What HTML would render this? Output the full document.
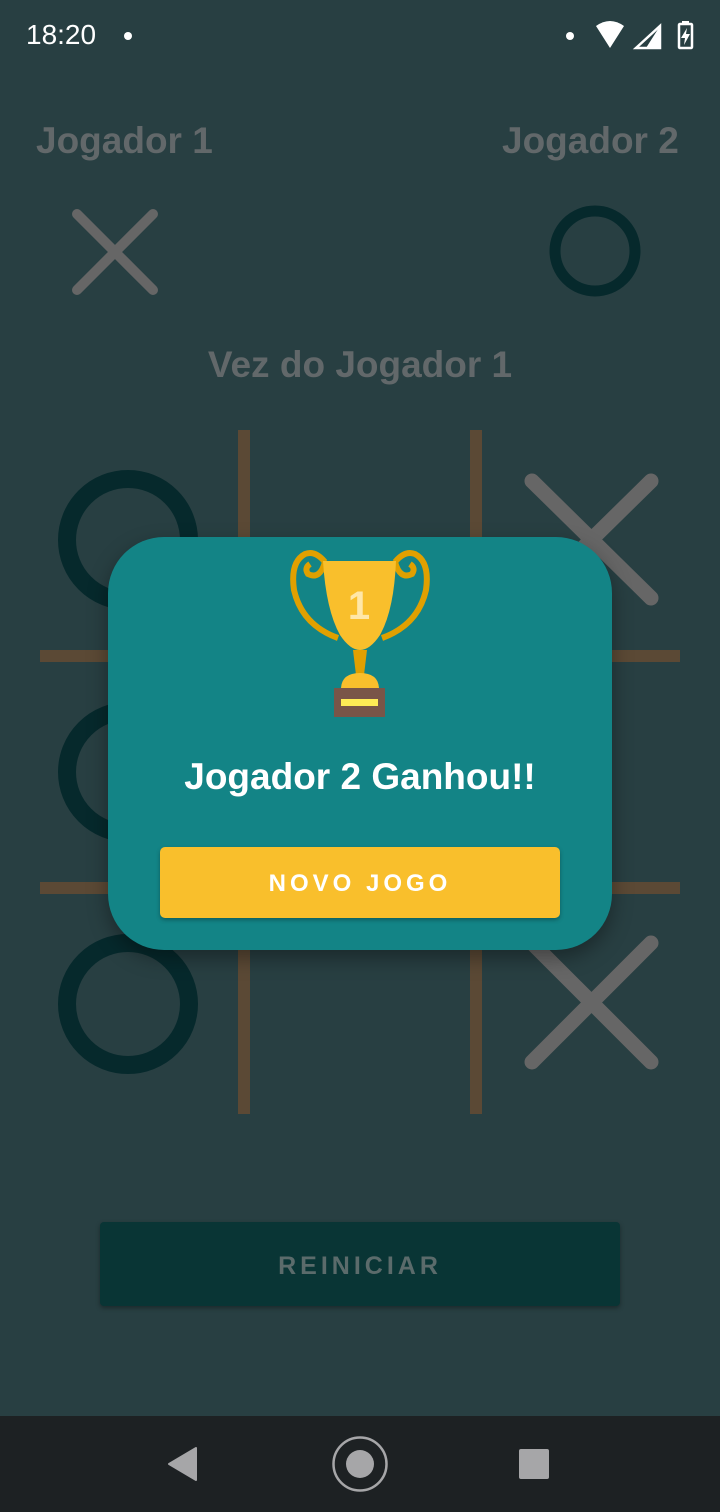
<!DOCTYPE html>
<html><head><meta charset="utf-8"><style>
*{margin:0;padding:0;box-sizing:border-box}
body{width:720px;height:1512px;background:#283f42;position:relative;overflow:hidden;font-family:"Liberation Sans",Roboto,sans-serif}
.abs{position:absolute}
.dim{color:#62686a;font-weight:bold}
</style></head><body>
<div class="abs" style="left:26px;top:19px;font-size:28px;color:#fff">18:20</div>
<div class="abs" style="left:124px;top:32px;width:8px;height:8px;border-radius:50%;background:#fff"></div>
<div class="abs" style="left:566px;top:32px;width:8px;height:8px;border-radius:50%;background:#fff"></div>
<svg class="abs" style="left:590px;top:20px" width="110" height="32">
<path d="M6 6 Q20 -4 34 6 L20 28 Z" fill="#fff"/>
<path d="M70 6 L70 28 L46 28 Z" fill="none" stroke="#fff" stroke-width="2.5"/>
<path d="M70 6 L70 28 L56 28 Z" fill="#fff"/>
<rect x="89" y="4" width="13" height="24" rx="1" fill="none" stroke="#fff" stroke-width="2.5"/>
<rect x="92" y="1" width="7" height="4" fill="#fff"/>
<path d="M97 8 L91 18 L95 18 L94 25 L100 14 L96 14 Z" fill="#fff"/>
</svg>
<div class="abs dim" style="left:36px;top:120px;font-size:37px">Jogador 1</div>
<div class="abs dim" style="left:502px;top:120px;font-size:37px">Jogador 2</div>
<div class="abs dim" style="left:0;width:720px;text-align:center;top:344px;font-size:37px">Vez do Jogador 1</div>
<svg class="abs" style="left:0;top:0" width="720" height="1200">
<g stroke="#666" stroke-linecap="round" fill="none">
<path d="M77 214 L153 290 M153 214 L77 290" stroke-width="10"/>
<path d="M532 481 L651 598 M651 481 L532 598" stroke-width="15"/>
<path d="M532 943 L651 1062 M651 943 L532 1062" stroke-width="15"/>
</g>
<circle cx="595" cy="251" r="40" fill="none" stroke="#06292c" stroke-width="11"/>
<g fill="none" stroke="#06292c" stroke-width="18">
<circle cx="128" cy="540" r="61"/>
<circle cx="128" cy="772" r="61"/>
<circle cx="128" cy="1004" r="61"/>
</g>
<g fill="#5b4935">
<rect x="238" y="430" width="12" height="684"/>
<rect x="470" y="430" width="12" height="684"/>
<rect x="40" y="650" width="640" height="12"/>
<rect x="40" y="882" width="640" height="12"/>
</g>
</svg>
<div class="abs" style="left:108px;top:537px;width:504px;height:413px;background:#138486;border-radius:56px;box-shadow:0 8px 20px rgba(0,0,0,.35)"></div>
<svg class="abs" style="left:280px;top:540px" width="160" height="190" viewBox="0 0 160 190">
<path d="M45 22 Q35 10 25 14 Q10 22 14 50 Q22 85 58 98" fill="none" stroke="#e0a000" stroke-width="6"/>
<path d="M45 22 Q40 40 28 34 Q24 28 30 24" fill="none" stroke="#e0a000" stroke-width="6"/>
<path d="M115 22 Q125 10 135 14 Q150 22 146 50 Q138 85 102 98" fill="none" stroke="#e0a000" stroke-width="6"/>
<path d="M115 22 Q120 40 132 34 Q136 28 130 24" fill="none" stroke="#e0a000" stroke-width="6"/>
<path d="M43 21 L116 21 Q114 70 100 95 Q90 110 80 110 Q70 110 60 95 Q46 70 43 21 Z" fill="#f9bf2c"/>
<path d="M73 110 L87 110 L84 135 L76 135 Z" fill="#e0a000"/>
<path d="M61 148 Q62 133 80 133 Q98 133 99 148 Z" fill="#f9bf2c"/>
<rect x="54" y="148" width="51" height="29" fill="#795548"/>
<rect x="61" y="159" width="37" height="7" fill="#ffeb55"/>
<text x="79" y="79" font-size="40" font-weight="bold" fill="#ffe7a8" text-anchor="middle" font-family="Liberation Sans,sans-serif">1</text>
</svg>
<div class="abs" style="left:108px;width:504px;text-align:center;top:756px;font-size:37px;font-weight:bold;color:#fff">Jogador 2 Ganhou!!</div>
<div class="abs" style="left:160px;top:847px;width:400px;height:71px;background:#f9bf2c;border-radius:5px;box-shadow:0 2px 4px rgba(0,0,0,.3);color:#fff;font-size:24px;letter-spacing:4px;text-align:center;line-height:74px;font-weight:bold">NOVO JOGO</div>
<div class="abs" style="left:100px;top:1222px;width:520px;height:84px;background:#093535;border-radius:4px;box-shadow:0 2px 5px rgba(0,0,0,.35);color:#5b6b6b;font-size:25px;letter-spacing:4px;text-align:center;line-height:88px;font-weight:bold">REINICIAR</div>
<div class="abs" style="left:0;top:1416px;width:720px;height:96px;background:#1d2123"></div>
<svg class="abs" style="left:0;top:1416px" width="720" height="96">
<path d="M196 32 L196 64 L169 48 Z" fill="#a6a6a8" stroke="#a6a6a8" stroke-width="2" stroke-linejoin="round"/>
<circle cx="360" cy="48" r="26.5" fill="none" stroke="#a6a6a8" stroke-width="2.5"/>
<circle cx="360" cy="48" r="14" fill="#a6a6a8"/>
<rect x="519" y="33" width="30" height="30" rx="2" fill="#a6a6a8"/>
</svg>
</body></html>
